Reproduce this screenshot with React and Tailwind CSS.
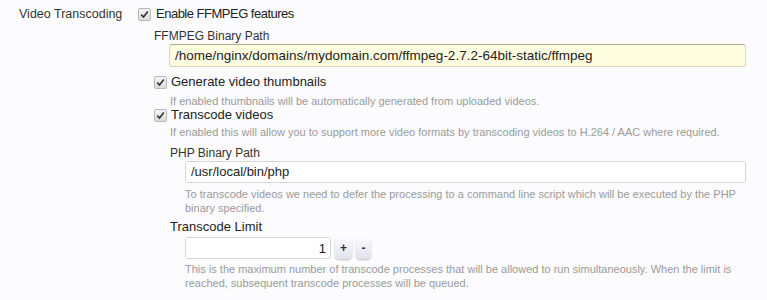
import React from "react";

function Check({ className = "" }) {
  return (
    <span
      className={`inline-flex items-center justify-center w-[13px] h-[13px] rounded-[2px] border border-[#b8b8b8] bg-gradient-to-b from-[#f4f4f4] to-[#dcdcdc] shrink-0 ${className}`}
    >
      <svg width="9" height="9" viewBox="0 0 9 9">
        <path d="M1.2 4.6 L3.5 7 L7.8 1.6" fill="none" stroke="#333" strokeWidth="1.6" />
      </svg>
    </span>
  );
}

function Hint({ children, className = "" }) {
  return <p className={`text-[11px] leading-[14px] text-[#9a9a9a] ${className}`}>{children}</p>;
}

const font = { fontFamily: '"Liberation Sans", Arial, sans-serif' };

export default function App() {
  return (
    <div className="w-[767px] h-[300px] bg-[#fcfcfe] text-[#222] overflow-hidden" style={font}>
      <div className="flex pt-[6px]">
        <div className="w-[138px] pl-[19px] text-[12.5px] leading-[16px] text-[#333]">Video Transcoding</div>
        <div className="flex-1">
          <label className="flex items-center gap-[5px] text-[13px] leading-[16px] tracking-[-0.5px]">
            <Check />
            <span>Enable FFMPEG features</span>
          </label>

          <div className="pl-[16px] mt-[7px]">
            <div className="text-[12px] leading-[14px] text-[#333]">FFMPEG Binary Path</div>
            <div className="pl-[15px] pr-[21px]">
              <input
                readOnly
                value="/home/nginx/domains/mydomain.com/ffmpeg-2.7.2-64bit-static/ffmpeg"
                className="w-full h-[23px] px-[5px] text-[13.5px] text-[#222] bg-[#fffde0] border border-[#ddd8b8] border-t-[#b4ad8a] rounded-[3px] outline-none"
                style={font}
              />
            </div>

            <label className="flex items-center gap-[4px] text-[13px] leading-[16px] mt-[7px]">
              <Check />
              <span>Generate video thumbnails</span>
            </label>
            <Hint className="pl-[16px] mt-[4px]">If enabled thumbnails will be automatically generated from uploaded videos.</Hint>

            <label className="flex items-center gap-[4px] text-[13px] leading-[16px] -mt-[1px]">
              <Check />
              <span>Transcode videos</span>
            </label>
            <Hint className="pl-[16px] mt-[2px]">
              If enabled this will allow you to support more video formats by transcoding videos to H.264 / AAC where required.
            </Hint>

            <div className="pl-[16px] mt-[7px] pr-[21px]">
              <div className="text-[12px] leading-[14px] text-[#333]">PHP Binary Path</div>
              <div className="pl-[15px] -mt-[1px]">
                <input
                  readOnly
                  value="/usr/local/bin/php"
                  className="w-full h-[22px] px-[5px] text-[13px] text-[#222] bg-white border border-[#d6d6d6] rounded-[3px] outline-none"
                  style={font}
                />
                <Hint className="mt-[4px]">
                  To transcode videos we need to defer the processing to a command line script which will be executed by the PHP binary specified.
                </Hint>
              </div>

              <div className="text-[13px] leading-[16px] text-[#222] mt-[4px]">Transcode Limit</div>
              <div className="pl-[15px] mt-[2px]">
                <div className="flex items-center gap-[4px]">
                  <input
                    readOnly
                    value="1"
                    className="w-[146px] h-[22px] px-[4px] text-right text-[13px] text-[#222] bg-white border border-[#d6d6d6] rounded-[3px] outline-none"
                    style={font}
                  />
                  <span className="w-[17px] h-[21px] flex items-center justify-center rounded-[4px] bg-gradient-to-b from-[#fafafe] to-[#e2e2ec] shadow-[0_1px_2px_rgba(0,0,0,0.25)] text-[12px] font-bold text-[#333]">+</span>
                  <span className="w-[15px] h-[21px] flex items-center justify-center rounded-[4px] bg-gradient-to-b from-[#fafafe] to-[#e2e2ec] shadow-[0_1px_2px_rgba(0,0,0,0.25)] text-[12px] font-bold text-[#333]">-</span>
                </div>
                <Hint className="mt-[3px] pr-[10px]">
                  This is the maximum number of transcode processes that will be allowed to run simultaneously. When the limit is reached, subsequent transcode processes will be queued.
                </Hint>
              </div>
            </div>
          </div>
        </div>
      </div>
    </div>
  );
}
